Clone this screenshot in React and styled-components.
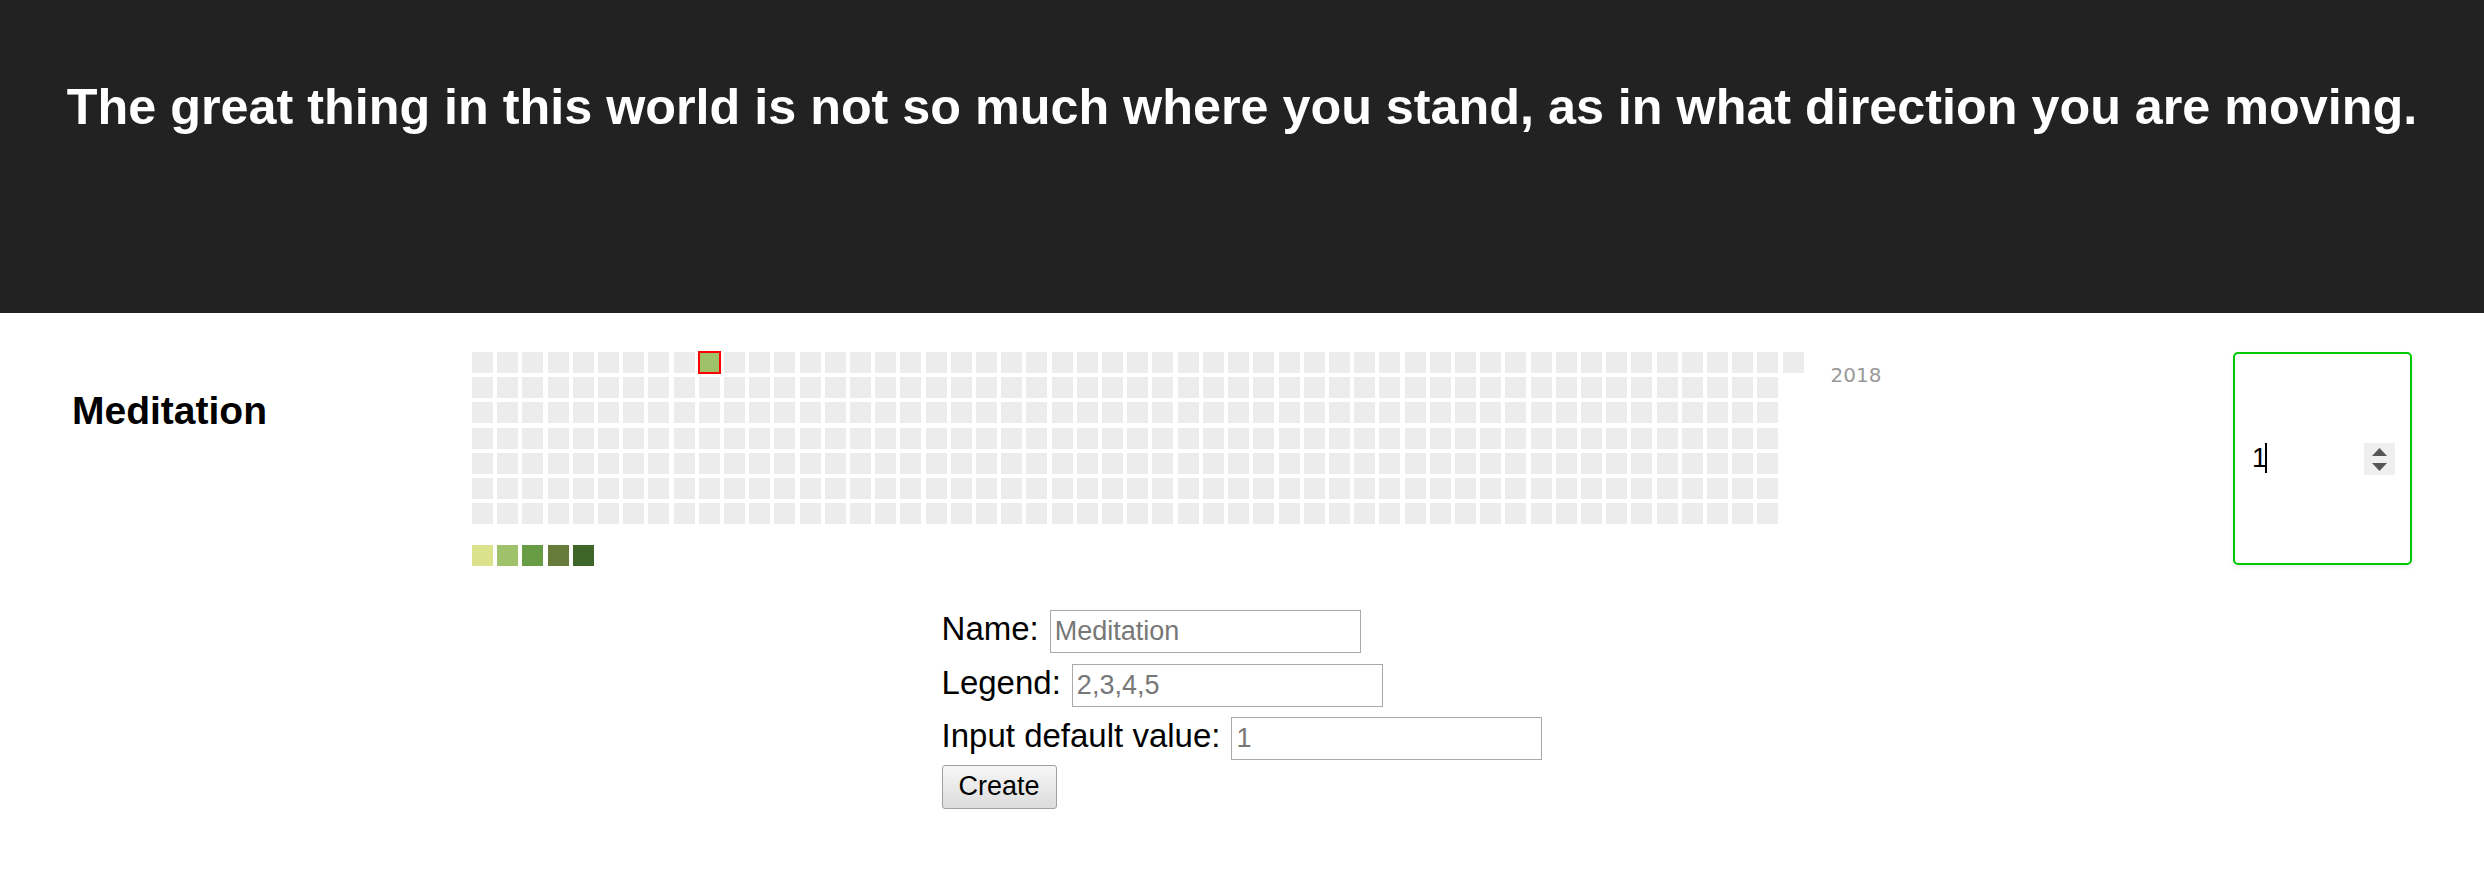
import React from 'react'
import styled, { createGlobalStyle } from 'styled-components'

const GlobalStyle = createGlobalStyle`
  html, body {
    margin: 0;
    padding: 0;
    background: #fff;
    font-family: "Liberation Sans", Arial, sans-serif;
  }
`

const Header = styled.header`
  height: 313px;
  box-sizing: border-box;
  padding-top: 77px;
  background-color: #222222;
  text-align: center;
`

const Quote = styled.h1`
  margin: 0;
  color: #fff;
  font-size: 50.3px;
  font-weight: bold;
`

const HabitRow = styled.section`
  display: flex;
  align-items: flex-start;
  padding: 39px 72px 0 72px;
`

const HabitName = styled.h2`
  flex: 0 0 400px;
  margin: 37px 0 0 0;
  font-size: 39px;
  font-weight: bold;
  color: #000;
`

const Calendar = styled.div`
  display: flex;
  flex-direction: column;
`

const DayGrid = styled.div`
  display: grid;
  grid-template-rows: repeat(7, 21px);
  grid-auto-flow: column;
  grid-auto-columns: 21px;
  gap: 4.21px;
`

const Day = styled.div`
  width: 21px;
  height: 21px;
  background: ${p => p.$color || '#ececec'};
  box-shadow: ${p => (p.$selected ? '0 0 0 1px #ff0000, inset 0 0 0 1px #ff0000' : 'none')};
`

const Legend = styled.div`
  display: flex;
  gap: 4.21px;
  margin-top: 21px;
`

const Year = styled.div`
  margin: 11px 0 0 27px;
  font-family: "DejaVu Sans", Verdana, sans-serif;
  font-size: 20px;
  color: #999;
`

const Spacer = styled.div`
  flex: 1;
`

const ValueBox = styled.div`
  position: relative;
  width: 179px;
  height: 213px;
  border-radius: 5px;
  box-shadow: 0 2px 4px rgba(0, 0, 0, 0.08);
`

const ValueInput = styled.input`
  width: 100%;
  height: 100%;
  box-sizing: border-box;
  border: 2px solid #00c800;
  border-radius: 5px;
  padding: 0 50px 0 17px;
  font-family: "Liberation Sans", Arial, sans-serif;
  font-size: 27px;
  color: #000;
  outline: none;
  -moz-appearance: textfield;

  &::-webkit-inner-spin-button,
  &::-webkit-outer-spin-button {
    -webkit-appearance: none;
    margin: 0;
  }
`

const Caret = styled.span`
  position: absolute;
  left: 32px;
  top: 91px;
  width: 2px;
  height: 30px;
  background: #000;
  pointer-events: none;
`

const Spinner = styled.div`
  position: absolute;
  right: 17px;
  top: 91px;
  width: 31px;
  height: 32px;
  background: #efefef;
  display: flex;
  flex-direction: column;
  align-items: center;
  justify-content: center;
  gap: 7px;
`

const FormWrap = styled.div`
  display: flex;
  justify-content: center;
  margin-top: 44px;
`

const Form = styled.form`
  display: flex;
  flex-direction: column;
  align-items: flex-start;
  gap: 10.5px;
  font-size: 33px;
  color: #000;
`

const Field = styled.label`
  display: flex;
  align-items: baseline;
  gap: 11px;
`

const TextInput = styled.input`
  width: 311px;
  height: 43px;
  box-sizing: border-box;
  border: 1px solid #a9a9a9;
  padding: 2px 4px;
  font-family: "Liberation Sans", Arial, sans-serif;
  font-size: 27px;
  color: #000;

  &::placeholder {
    color: #777;
  }
`

const CreateButton = styled.button`
  margin-top: -6px;
  height: 44px;
  padding: 0 16px;
  border: 1px solid #a0a0a0;
  border-radius: 3px;
  background: linear-gradient(#f7f7f7, #dcdcdc);
  font-family: "Liberation Sans", Arial, sans-serif;
  font-size: 27px;
  color: #000;
`

const legendColors = ['#dbe28b', '#9ec16a', '#689d45', '#677b3a', '#3e6628']
const days = Array.from({ length: 365 }, (_, i) => i)
const selectedDay = 63

function Triangle({ up }) {
  return (
    <svg width="15" height="8" viewBox="0 0 15 8">
      <path d={up ? 'M7.5 0 L15 8 L0 8 Z' : 'M0 0 L15 0 L7.5 8 Z'} fill="#555" />
    </svg>
  )
}

export default function App() {
  return (
    <>
      <GlobalStyle />
      <Header>
        <Quote>The great thing in this world is not so much where you stand, as in what direction you are moving.</Quote>
      </Header>

      <HabitRow>
        <HabitName>Meditation</HabitName>
        <Calendar>
          <DayGrid>
            {days.map(d => (
              <Day
                key={d}
                $selected={d === selectedDay}
                $color={d === selectedDay ? legendColors[1] : null}
              />
            ))}
          </DayGrid>
          <Legend>
            {legendColors.map(c => (
              <Day key={c} $color={c} />
            ))}
          </Legend>
        </Calendar>
        <Year>2018</Year>
        <Spacer />
        <ValueBox>
          <ValueInput type="number" defaultValue="1" />
          <Caret />
          <Spinner>
            <Triangle up />
            <Triangle />
          </Spinner>
        </ValueBox>
      </HabitRow>

      <FormWrap>
        <Form onSubmit={e => e.preventDefault()}>
          <Field>
            Name: <TextInput placeholder="Meditation" />
          </Field>
          <Field>
            Legend: <TextInput placeholder="2,3,4,5" />
          </Field>
          <Field>
            Input default value: <TextInput placeholder="1" />
          </Field>
          <CreateButton type="submit">Create</CreateButton>
        </Form>
      </FormWrap>
    </>
  )
}
